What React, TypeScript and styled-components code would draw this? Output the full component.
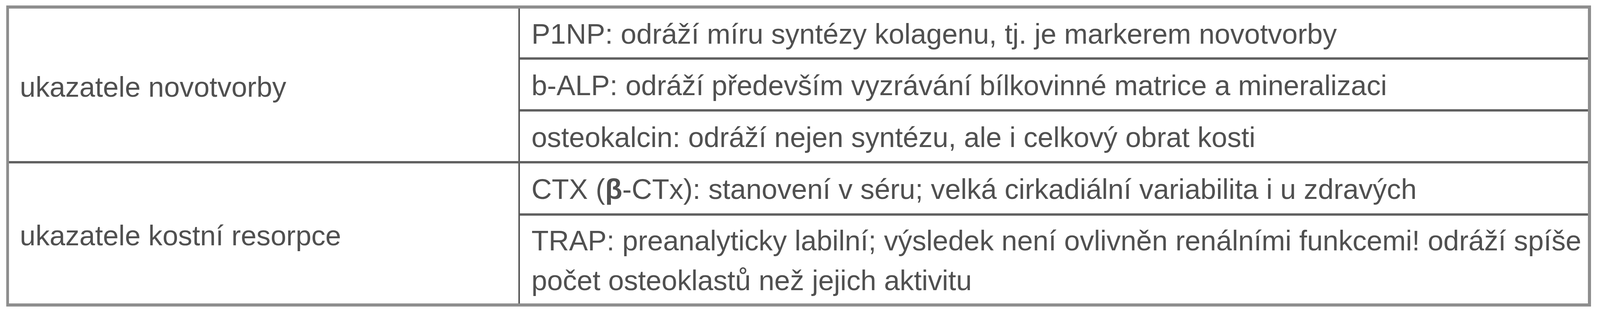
import React from 'react';
import styled, { createGlobalStyle } from 'styled-components';

// horizontal sizes follow the viewport width (reference is 4483px wide)
const u = (n: number) => `calc(100vw * ${n} / 4483)`;

const GlobalStyle = createGlobalStyle`
  html, body {
    margin: 0;
    padding: 0;
    background: #ffffff;
    overflow: hidden;
  }
  body {
    font-family: "Liberation Sans", Arial, sans-serif;
  }
`;

const Page = styled.div`
  width: 100vw;
  height: 800px;
  box-sizing: border-box;
  padding: 14px 0 0 ${u(18)};
  background: #ffffff;
`;

const Table = styled.div`
  width: ${u(4440)};
  box-sizing: border-box;
  display: flex;
  flex-direction: column;
  border-style: solid;
  border-color: #8e8e8e;
  border-width: 8px ${u(9)} 8px ${u(8)};
  color: #505050;
  font-size: ${u(79)};
  line-height: 102px;
`;

const Group = styled.div<{ $first: boolean }>`
  display: grid;
  grid-template-columns: ${u(1427)} minmax(0, 1fr);
  border-top: ${(p) => (p.$first ? 'none' : '6px solid #616161')};
`;

const Label = styled.div`
  display: flex;
  align-items: center;
  padding: 10px 0 0 ${u(30)};
  white-space: nowrap;
`;

const Items = styled.div`
  display: flex;
  flex-direction: column;
  border-left: ${u(5)} solid #585858;
`;

const Item = styled.div<{ $first: boolean; $height: number }>`
  display: flex;
  align-items: center;
  box-sizing: border-box;
  min-height: ${(p) => p.$height + (p.$first ? 0 : 6)}px;
  padding: 4px ${u(4)} 0 ${u(32)};
  border-top: ${(p) => (p.$first ? 'none' : '6px solid #616161')};
`;

const Greek = styled.span`
  font-weight: 700;
`;

interface MarkerGroup {
  label: string;
  items: { text: React.ReactNode; height: number }[];
}

const groups: MarkerGroup[] = [
  {
    label: 'ukazatele novotvorby',
    items: [
      { text: 'P1NP: odráží míru syntézy kolagenu, tj. je markerem novotvorby', height: 125 },
      { text: 'b-ALP: odráží především vyzrávání bílkovinné matrice a mineralizaci', height: 127 },
      { text: 'osteokalcin: odráží nejen syntézu, ale i celkový obrat kosti', height: 127 },
    ],
  },
  {
    label: 'ukazatele kostní resorpce',
    items: [
      {
        text: (
          <span>
            CTX (<Greek>β</Greek>-CTx): stanovení v séru; velká cirkadiální variabilita i u zdravých
          </span>
        ),
        height: 128,
      },
      {
        text: 'TRAP: preanalyticky labilní; výsledek není ovlivněn renálními funkcemi! odráží spíše počet osteoklastů než jejich aktivitu',
        height: 225,
      },
    ],
  },
];

const App: React.FC = () => {
  return (
    <>
      <GlobalStyle />
      <Page>
        <Table>
          {groups.map((group, gi) => (
            <Group key={group.label} $first={gi === 0}>
              <Label>{group.label}</Label>
              <Items>
                {group.items.map((item, ii) => (
                  <Item key={ii} $first={ii === 0} $height={item.height}>
                    {item.text}
                  </Item>
                ))}
              </Items>
            </Group>
          ))}
        </Table>
      </Page>
    </>
  );
};

export default App;
